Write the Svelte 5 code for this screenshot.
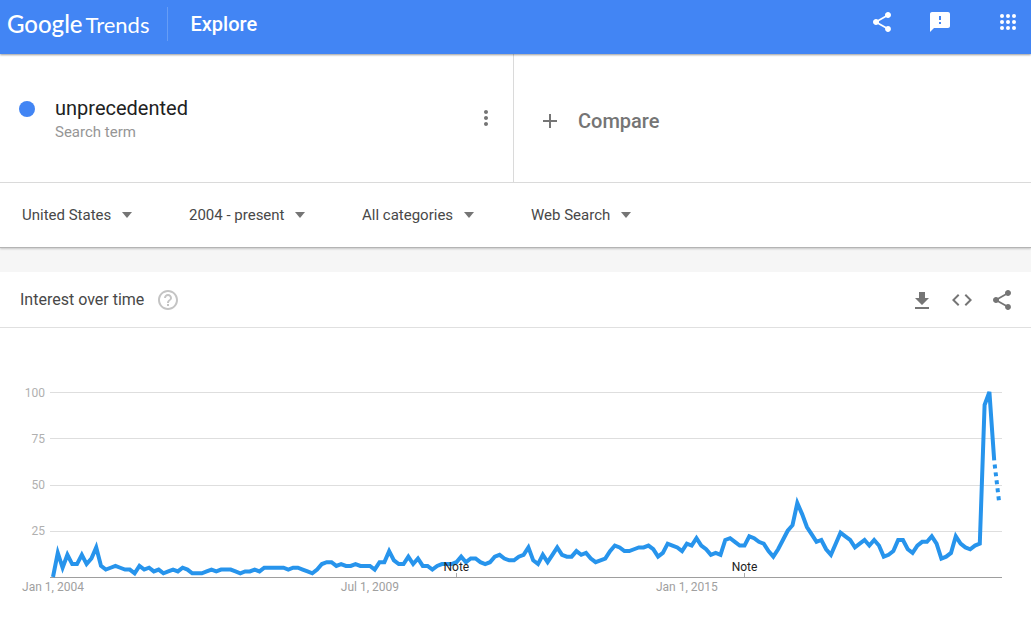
<script lang="ts">
    type Filter = {
        name: string;
        value: string;
    }

    const filters: Filter[] = [
        { name: 'Location', value: 'United States' },
        { name: 'Time range', value: '2004 - present' },
        { name: 'Category', value: 'All categories' },
        { name: 'Search type', value: 'Web Search' },
    ];

    const icons = {
        share: 'M18 16.08c-.76 0-1.44.3-1.96.77L8.91 12.7c.05-.23.09-.46.09-.7s-.04-.47-.09-.7l7.05-4.11c.54.5 1.25.81 2.04.81 1.66 0 3-1.34 3-3s-1.34-3-3-3-3 1.34-3 3c0 .24.04.47.09.7L8.04 9.81C7.5 9.31 6.79 9 6 9c-1.66 0-3 1.34-3 3s1.34 3 3 3c.79 0 1.5-.31 2.04-.81l7.12 4.16c-.05.21-.08.43-.08.65 0 1.61 1.31 2.92 2.92 2.92 1.61 0 2.92-1.31 2.92-2.92s-1.31-2.92-2.92-2.92z',
        feedback: 'M20 2H4c-1.1 0-1.99.9-1.99 2L2 22l4-4h14c1.1 0 2-.9 2-2V4c0-1.1-.9-2-2-2zm-7 12h-2v-2h2v2zm0-4h-2V6h2v4z',
        download: 'M19 10h-4V4H9v6H5l7 7 7-7zM5 19v2h14v-2H5z',
        code: 'M9.4 16.6L4.8 12l4.6-4.6L8 6l-6 6 6 6 1.4-1.4zm5.2 0l4.6-4.6-4.6-4.6L16 6l6 6-6 6-1.4-1.4z',
        help: 'M11 18h2v-2h-2v2zm1-16C6.48 2 2 6.48 2 12s4.48 10 10 10 10-4.48 10-10S17.52 2 12 2zm0 18c-4.41 0-8-3.59-8-8s3.59-8 8-8 8 3.59 8 8-3.59 8-8 8zm0-14c-2.21 0-4 1.79-4 4h2c0-1.1.9-2 2-2s2 .9 2 2c0 2-3 1.75-3 5h2c0-2.25 3-2.5 3-5 0-2.21-1.79-4-4-4z',
        more: 'M12 8c1.1 0 2-.9 2-2s-.9-2-2-2-2 .9-2 2 .9 2 2 2zm0 2c-1.1 0-2 .9-2 2s.9 2 2 2 2-.9 2-2-.9-2-2-2zm0 6c-1.1 0-2 .9-2 2s.9 2 2 2 2-.9 2-2-.9-2-2-2z',
        plus: 'M19 13h-6v6h-2v-6H5v-2h6V5h2v6h6v2z',
    };

    // one value per month, from January 2004
    const interest = [
        0, 13, 5, 12, 7, 7, 12, 7, 10, 16, 6, 4,
        5, 6, 5, 4, 4, 2, 6, 4, 5, 3, 4, 2,
        3, 4, 3, 5, 4, 2, 2, 2, 3, 4, 3, 4,
        4, 4, 3, 2, 3, 3, 4, 3, 5, 5, 5, 5,
        5, 4, 5, 5, 4, 3, 2, 4, 7, 8, 8, 6,
        7, 6, 6, 7, 6, 6, 6, 4, 8, 8, 14, 9,
        7, 7, 11, 7, 10, 6, 6, 4, 6, 7, 7, 7,
        8, 11, 8, 10, 10, 8, 7, 8, 11, 12, 10, 9,
        9, 11, 12, 16, 9, 7, 12, 8, 12, 16, 12, 11,
        11, 14, 12, 13, 10, 8, 9, 10, 14, 17, 16, 14,
        14, 15, 16, 16, 17, 15, 11, 13, 18, 17, 16, 14,
        18, 17, 21, 17, 15, 12, 13, 12, 20, 21, 19, 17,
        17, 22, 21, 19, 18, 14, 11, 15, 20, 25, 28, 40,
        34, 27, 23, 19, 20, 15, 12, 18, 24, 22, 20, 16,
        18, 20, 17, 20, 17, 11, 12, 14, 20, 20, 15, 13,
        17, 19, 19, 22, 18, 10, 11, 13, 22, 18, 16, 15,
        17, 18, 93, 100, 63, 41,
    ];
    const last = interest.length - 1;

    const gridValues = [100, 75, 50, 25];
    const dates = [
        { month: 0, text: 'Jan 1, 2004' },
        { month: 66, text: 'Jul 1, 2009' },
        { month: 132, text: 'Jan 1, 2015' },
    ];
    const notes = [84, 144];

    let width = $state(1031);

    const baseline = 249;
    const x = (i: number) => 53 + i * (width - 85) / last;
    const y = (value: number) => baseline - value * 1.85;
    const points = (from: number, to: number) =>
        interest.slice(from, to + 1).map((v, i) => `${x(from + i)},${y(v)}`).join(' ');
</script>

{#snippet icon(path: string)}
    <svg class="icon" viewBox="0 0 24 24" aria-hidden="true"><path d={path} /></svg>
{/snippet}

<header>
    <a class="logo" href="#home"><b>Google</b> <span>Trends</span></a>
    <h1>Explore</h1>
    <div class="header-actions">
        <button aria-label="Share">{@render icon(icons.share)}</button>
        <button aria-label="Send feedback">{@render icon(icons.feedback)}</button>
        <button class="apps" aria-label="Google apps">
            <svg class="icon" viewBox="0 0 24 24" aria-hidden="true">
                {#each [6, 12, 18] as cy}
                    {#each [6, 12, 18] as cx}
                        <circle {cx} {cy} r="2" />
                    {/each}
                {/each}
            </svg>
        </button>
    </div>
</header>

<main>
    <section class="query">
        <div class="terms">
            <div class="term">
                <span class="dot"></span>
                <div class="term-text">
                    <h2>unprecedented</h2>
                    <p>Search term</p>
                </div>
                <button aria-label="More options">{@render icon(icons.more)}</button>
            </div>
            <button class="compare">{@render icon(icons.plus)}Compare</button>
        </div>
        <div class="filters">
            {#each filters as filter}
                <label class="filter">
                    <select aria-label={filter.name}>
                        <option>{filter.value}</option>
                    </select>
                    <svg class="arrow" viewBox="0 0 12 6" aria-hidden="true"><path d="M1 0h10L6 6z" /></svg>
                </label>
            {/each}
        </div>
    </section>

    <section class="card">
        <div class="card-header">
            <h3>Interest over time</h3>
            <button class="help" aria-label="Help">{@render icon(icons.help)}</button>
            <div class="card-actions">
                <button aria-label="Download CSV">{@render icon(icons.download)}</button>
                <button aria-label="Embed">{@render icon(icons.code)}</button>
                <button aria-label="Share chart">{@render icon(icons.share)}</button>
            </div>
        </div>
        <div class="chart" bind:clientWidth={width}>
            <svg {width} height="280" role="img" aria-label="Interest over time">
                {#each gridValues as value}
                    <rect class="grid" x="50" y={Math.round(y(value))} width={width - 79} height="1" />
                    <text class="axis scale" x="45" y={Math.floor(y(value)) + 5} text-anchor="end">{value}</text>
                {/each}
                <rect class="base" x="50" y={baseline} width={width - 79} height="1" />
                <polyline class="line" points={points(0, last - 1)} />
                <polyline class="line partial" points={points(last - 1, last)} />
                {#each dates as date}
                    <text class="axis" x={x(date.month)} y={baseline + 14} text-anchor="middle">{date.text}</text>
                {/each}
                {#each notes as month}
                    <rect class="tick" x={Math.floor(x(month))} y={baseline - 4} width="1" height="4" />
                    <text class="note" x={x(month)} y={baseline - 6} text-anchor="middle">Note</text>
                {/each}
            </svg>
        </div>
    </section>
</main>

<style>
    :global(body) {
        margin: 0;
        background: #fff;
        font-family: Roboto, Arial, sans-serif;
    }
    h1, h2, h3, p {
        margin: 0;
        font-weight: 400;
    }
    button {
        display: flex;
        align-items: center;
        justify-content: center;
        flex: none;
        width: 40px;
        height: 40px;
        padding: 0;
        border: 0;
        background: none;
        color: inherit;
        font: inherit;
        cursor: pointer;
    }
    .icon {
        display: block;
        flex: none;
        width: 24px;
        height: 24px;
        fill: currentColor;
    }

    header {
        position: relative;
        display: flex;
        align-items: center;
        box-sizing: border-box;
        height: 54px;
        padding: 0 3px 6px 7px;
        background: #4285f4;
        color: #fff;
        box-shadow: 0 1px 2px rgba(0, 0, 0, .4);
    }
    .logo {
        display: flex;
        align-items: baseline;
        gap: 3px;
        padding-right: 18px;
        color: #fff;
        font: 400 22px/34px Lato, sans-serif;
        text-decoration: none;
    }
    .logo b {
        font-size: 24px;
        font-weight: 500;
    }
    h1 {
        padding: 3px 0 3px 22px;
        border-left: 1px solid #669df6;
        font-size: 20px;
        font-weight: 500;
        line-height: 28px;
    }
    .header-actions {
        display: flex;
        gap: 18px;
        margin-left: auto;
        padding-bottom: 4px;
    }
    .apps {
        margin-left: 10px;
    }

    .query {
        border-bottom: 1px solid #b4b4b4;
        box-shadow: 0 1px 2px rgba(0, 0, 0, .2);
    }
    .terms {
        display: grid;
        grid-template-columns: 1fr 1fr;
        height: 128px;
        padding-right: 3px;
        border-bottom: 1px solid #dadada;
    }
    .term {
        display: flex;
        align-items: center;
        padding: 0 7px 0 19px;
        border-right: 1px solid #dadada;
        color: #757575;
    }
    .dot {
        width: 16px;
        height: 16px;
        margin: 0 20px 18px 0;
        border-radius: 50%;
        background: #4285f4;
    }
    .term-text {
        flex: 1;
    }
    h2 {
        color: #212121;
        font-size: 20px;
        line-height: 28px;
    }
    .term-text p {
        color: #969696;
        font-size: 15px;
        line-height: 20px;
    }
    .compare {
        justify-content: flex-start;
        gap: 16px;
        width: auto;
        height: auto;
        padding: 6px 24px 0;
        color: #757575;
        font-size: 20px;
        font-weight: 500;
    }
    .filters {
        display: flex;
        align-items: center;
        gap: 56px;
        height: 64px;
        padding: 0 22px;
    }
    .filter {
        display: flex;
        align-items: center;
        gap: 9px;
    }
    select {
        appearance: none;
        margin: 0;
        padding: 0;
        border: 0;
        background: none;
        color: #484848;
        font: 400 15px/20px Roboto, Arial, sans-serif;
    }
    .arrow {
        width: 12px;
        height: 6px;
        fill: #757575;
    }

    main {
        background: #f6f6f6;
    }
    .query, .card {
        background: #fff;
    }
    .card {
        margin-top: 24px;
    }
    .card-header {
        display: flex;
        align-items: center;
        height: 55px;
        padding: 0 9px 0 20px;
        border-bottom: 1px solid #e0e0e0;
        color: #757575;
    }
    h3 {
        color: #484848;
        font-size: 16px;
        line-height: 24px;
    }
    .help {
        margin-left: 4px;
        color: #c4c4c4;
    }
    .card-actions {
        display: flex;
        margin-left: auto;
    }

    .chart {
        overflow: hidden;
    }
    .chart svg {
        display: block;
    }
    .grid {
        fill: #dedede;
    }
    .base {
        fill: #9e9e9e;
    }
    .tick {
        fill: #ababab;
    }
    .line {
        fill: none;
        stroke: #2794ec;
        stroke-width: 4;
    }
    .partial {
        stroke-dasharray: 4 4;
        stroke-dashoffset: 4;
    }
    .axis {
        fill: #a0a0a0;
        font-size: 12px;
    }
    .scale {
        fill: #b0b0b0;
    }
    .note {
        fill: #222;
        font-size: 12px;
    }
</style>
